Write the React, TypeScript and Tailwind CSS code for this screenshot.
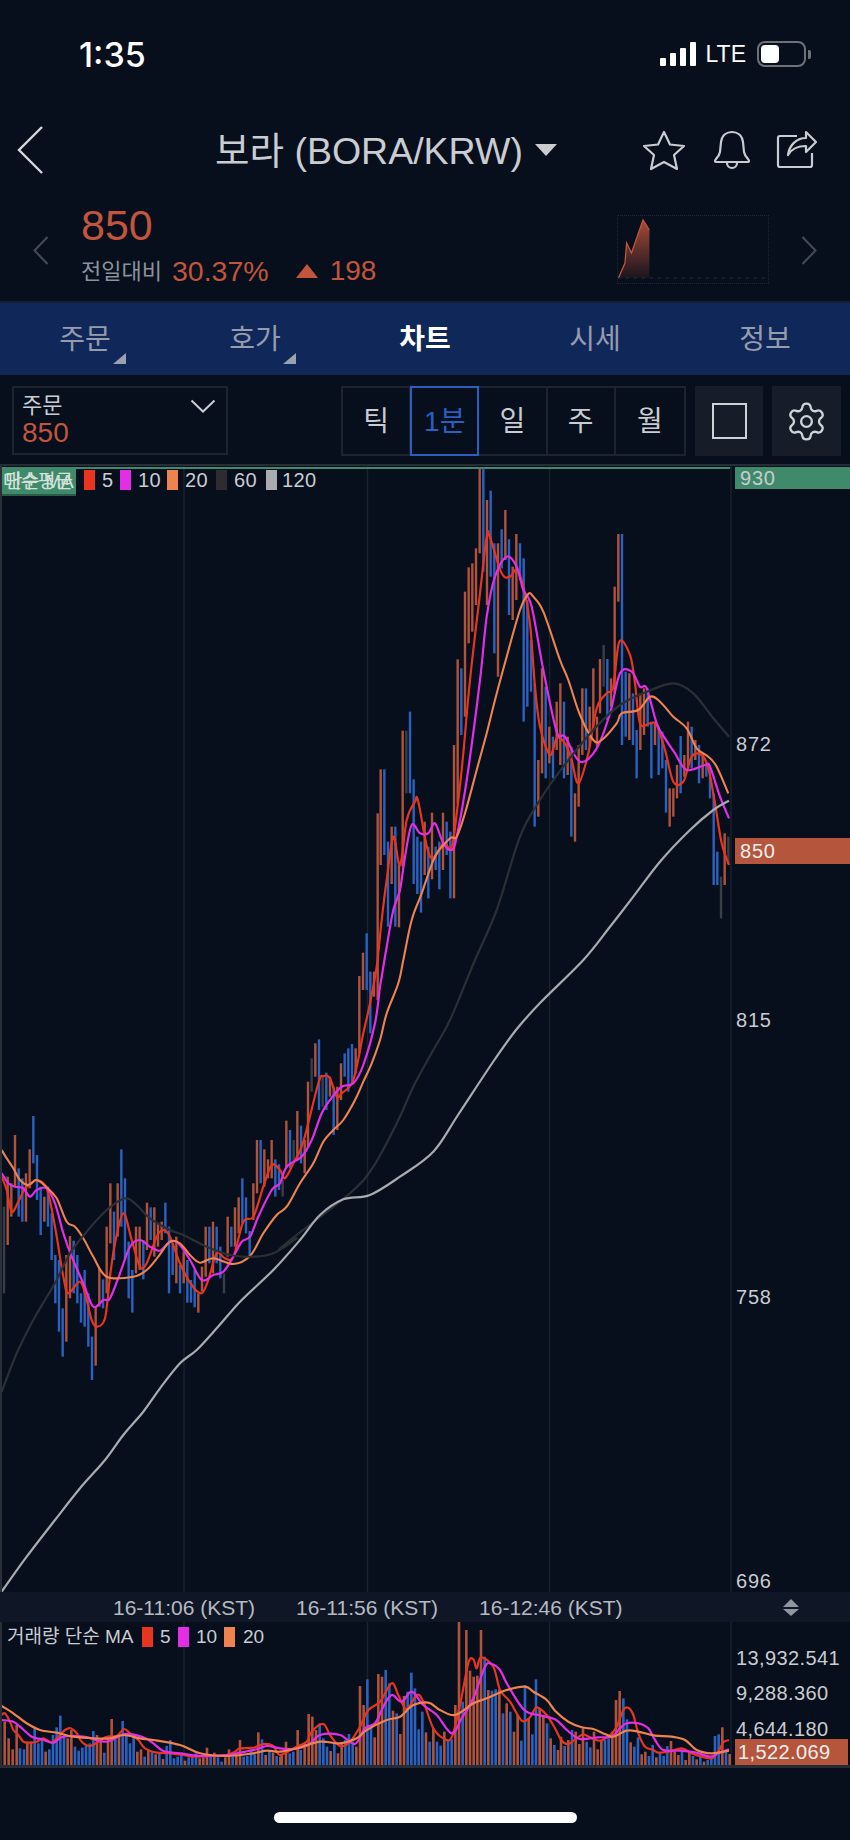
import React from 'react';
import { Settings } from 'lucide-react';

type Bar = [number, number, number, number];
type Pt = [number, number];

const R = 0;
const B = 1;
const G = 2;
const barColors = ['#b0533b', '#2b62bf', '#3a3e45'];

// Coordinates below were read off 3x crops, so each block keeps its crop origin
const toBars = (ox: number, oy: number, rows: Bar[]) =>
  rows.map(([x, t, b, c]) => ({ x: ox + x / 3, t: oy + t / 3, b: oy + b / 3, c }));

const toPts = (ox: number, oy: number, a: number[]): Pt[] => {
  const out: Pt[] = [];
  for (let i = 0; i < a.length; i += 2) out.push([ox + a[i] / 3, oy + a[i + 1] / 3]);
  return out;
};

// Catmull-Rom through the points, keeps the moving averages from looking jagged
const smooth = (p: Pt[]) => {
  let d = `M${p[0][0].toFixed(1)} ${p[0][1].toFixed(1)}`;
  for (let i = 0; i < p.length - 1; i++) {
    const a = p[i - 1] || p[i];
    const b = p[i];
    const c = p[i + 1];
    const e = p[i + 2] || c;
    const c1x = b[0] + (c[0] - a[0]) / 6;
    const c1y = b[1] + (c[1] - a[1]) / 6;
    const c2x = c[0] - (e[0] - b[0]) / 6;
    const c2y = c[1] - (e[1] - b[1]) / 6;
    d += ` C${c1x.toFixed(1)} ${c1y.toFixed(1)} ${c2x.toFixed(1)} ${c2y.toFixed(1)} ${c[0].toFixed(1)} ${c[1].toFixed(1)}`;
  }
  return d;
};

const priceBars = [
  ...toBars(0, 1100, [
    [12,320,580,G],[23,230,435,R],[34,250,350,R],[45,105,260,R],[56,205,350,B],[67,235,365,B],[78,220,365,R],[89,148,265,R],[100,48,190,B],[111,165,300,B],
    [122,260,405,B],[133,290,365,R],[144,260,380,B],[155,340,480,B],[166,465,610,B],[177,480,695,B],[188,625,770,B],[199,465,725,R],[210,408,595,R],[221,422,580,B],
    [232,465,610,B],[243,580,668,B],[254,510,680,B],[265,580,740,B],[276,710,840,B],[287,620,797,R],[298,505,620,R],[309,538,625,B],[320,380,580,R],[331,250,430,R],
    [342,335,480,B],[353,250,410,R],[364,148,380,B],[375,235,480,B],[386,425,595,B],[397,510,638,B],[408,380,520,R],[419,380,510,R],[430,420,538,B],[441,308,450,R],
    [452,322,420,B],[463,322,470,R],[474,368,440,R],[485,365,420,R],[496,308,400,B],[507,380,580,B],[518,430,525,B],[529,410,550,R],[540,495,580,B],[551,455,550,R],
    [562,480,608,B],[573,540,608,B],[584,510,622,B],[595,580,638,R],[606,500,575,R],[617,380,530,R],[628,380,490,B],[639,365,520,R],[650,380,490,B],[661,440,535,B],
    [672,520,580,G],[683,350,470,R],[694,380,440,B],[705,322,440,R],[716,292,400,R],[727,235,370,B],[738,292,400,B],[749,393,470,B],[760,250,360,R],[771,120,280,R],
    [782,120,250,B],[793,148,260,R],[804,178,235,R],[815,120,235,R],[826,178,290,B],[837,193,270,B],[848,240,290,G],[859,62,205,R],[870,90,205,B],[881,120,190,G],
    [892,33,180,R],[903,77,190,B],[914,120,220,R],
  ]),
  ...toBars(150, 950, [
    [474,395,590,R],[485,325,425,G],[496,280,380,R],[507,268,480,B],[518,375,470,G],[529,368,480,B],[540,380,440,R],[551,410,555,B],[562,410,540,R],[573,340,450,R],
    [584,310,380,B],[595,295,425,B],[606,282,400,B],[617,295,370,R],[628,78,310,R],[639,8,120,R],[650,-50,120,B],[661,65,250,B],[672,65,140,R],[683,-410,150,R],
  ]),
  ...toBars(230, 680, [
    [452,268,555,R],[463,268,525,B],[474,485,740,B],[485,440,612,R],[496,440,740,B],[507,555,742,R],[518,152,560,R],[529,152,340,G],[540,95,340,B],[551,298,612,B],
    [562,470,642,B],[573,485,698,B],[584,425,585,R],[595,500,655,B],[606,398,598,R],[617,500,570,B],[628,485,628,B],[639,398,570,R],[650,425,525,B],[661,455,655,B],
  ]),
  ...toBars(380, 460, [
    [222,855,1315,R],[233,598,1030,R],[244,625,825,B],[255,395,770,R],[266,322,550,R],[277,310,515,R],[288,265,435,R],[299,25,280,R],[310,25,335,B],[321,120,435,R],
    [332,92,350,B],[343,250,580,B],[354,250,650,R],[365,208,325,B],[376,150,300,R],[387,238,465,B],[398,320,480,R],[409,222,420,R],[420,250,360,B],[431,295,785,B],
    [442,420,740,B],[453,540,695,B],[464,670,1100,B],[475,900,1070,R],[486,625,940,R],[497,680,955,B],[508,800,910,R],[519,830,955,B],[530,725,870,R],[541,670,915,R],
    [552,725,955,B],[563,830,945,R],[574,860,1130,B],[585,1000,1145,R],[596,855,1040,R],[607,685,885,R],[618,685,870,B],[629,740,860,R],[640,625,800,R],[651,770,860,R],
    [660,597,760,R],[671,555,680,G],[682,597,780,B],[693,655,740,R],[704,380,700,R],[715,222,425,R],[726,222,855,B],[737,635,830,B],[748,640,840,R],[759,700,855,B],
    [770,810,955,B],[781,700,870,R],[792,685,825,R],[803,685,800,B],[814,785,955,B],[825,785,855,R],[836,800,945,B],[847,815,925,B],[858,900,1058,B],[869,985,1100,R],
    [880,985,1070,R],[891,915,1015,R],[902,828,1000,B],[913,885,950,R],[924,785,925,R],[935,800,925,B],[946,840,900,R],[957,855,970,B],[968,885,955,R],[979,915,950,B],
    [990,915,1015,B],[1001,1000,1275,B],[1012,1175,1275,B],[1023,1250,1375,G],[1034,1120,1275,R],[1045,1130,1210,G],
  ]),
];

const ma5 = [
  ...toPts(0, 1100, [5,230,20,270,35,335,55,305,75,265,95,250,110,240,140,265,165,380,190,530,205,580,240,545,260,600,275,660,290,680,315,655,330,530,345,430,370,340,395,420,420,500,440,490,470,410,490,390,510,410,540,490,575,555,605,580,625,540,650,460,675,475,700,470,730,365,760,350,790,260,815,195,840,210,855,235,880,190]),
  ...toPts(150, 950, [460,575,505,400,520,378,540,385,560,440,575,430,610,390,640,250,660,160,680,50]),
  ...toPts(230, 680, [455,720,470,600,490,470,510,555,530,420,555,365,565,365,600,530,640,490,665,500]),
  ...toPts(380, 460, [235,1020,250,880,270,660,300,400,320,230,330,232,365,340,390,350,410,330,430,380,450,490,465,680,480,800,510,885,530,835,555,850,575,900,595,970,625,880,650,745,680,700,700,680,718,545,750,585,765,670,780,790,810,790,830,795,855,870,880,965,910,965,935,890,965,885,985,925,1005,1030,1025,1150,1047,1215]),
];

const ma10 = [
  ...toPts(0, 1100, [5,220,25,250,45,260,70,265,90,290,110,270,140,265,165,310,190,400,215,470,250,550,280,620,310,600,330,595,360,520,390,440,420,420,450,440,480,452,510,425,535,430,570,480,605,540,640,525,670,515,700,470,725,425,750,410,775,350,815,270,840,250,860,200,905,170,935,120,965,40]),
  ...toPts(150, 950, [540,450,575,410,610,400,640,345,675,220,690,110]),
  ...toPts(230, 680, [455,890,470,800,490,690,510,630,525,530,545,435,570,460,595,460,615,430,640,490,665,510,680,470]),
  ...toPts(380, 460, [260,960,300,660,320,470,345,350,380,290,410,320,430,390,455,440,490,630,530,815,555,830,600,905,650,865,690,760,720,640,755,635,780,680,800,685,830,790,855,835,885,880,920,930,975,915,990,920,1020,1010,1047,1075]),
];

const ma20 = [
  ...toPts(0, 1100, [5,150,20,175,40,205,60,240,85,255,110,240,140,262,170,295,200,365,225,380,250,415,280,470,320,530,400,530,440,510,475,470,510,425,540,430,570,465,600,488,640,475,700,492,750,468,790,400,830,345,860,320,900,250,940,190,970,125,1000,90,1030,60,1065,0]),
  ...toPts(150, 950, [640,395,665,340,690,270,710,190,745,100]),
  ...toPts(380, 460, [70,1500,95,1380,125,1300,165,1190,210,1135,230,1130,255,1060,290,930,320,820,345,720,380,590,420,450,445,402,460,410,490,455,540,600,565,660,600,765,640,840,665,840,710,790,725,760,775,750,810,710,840,725,880,770,920,805,950,865,985,890,1010,920,1045,1000]),
];

const ma60 = [
  ...toPts(0, 1300, [5,275,50,160,100,60]),
  ...toPts(0, 1100, [135,600,170,540,210,460,260,395,320,330,375,295,410,315,450,355,510,390,550,405,620,440,690,465,760,470,820,460,890,415]),
  ...toPts(150, 950, [385,900,440,855,600,730,670,650,745,510,790,410,850,300,900,210]),
  ...toPts(380, 460, [285,1500,350,1350,420,1130,480,1020,550,920,640,810,720,735,800,695,880,670,940,700,1000,775,1047,830]),
];

const ma120: Pt[] = [
  ...toPts(0, 1300, [5,875,80,770,165,660,240,565,315,480,370,405,430,335,480,265,540,190,590,150,650,85]),
  ...toPts(0, 1100, [725,600,820,510,900,420,960,345,1030,298,1110,285]),
  ...toPts(150, 950, [750,680,850,605]),
  [458,1115],[493,1062],[516,1030],[540,1003],
  ...toPts(380, 460, [610,1500,690,1400,760,1310,840,1205,930,1110,1000,1050,1047,1022]),
];

const volBars = [
  ...toBars(0, 1620, [
    [14,305,435,R],[26,355,435,R],[38,388,435,R],[50,315,435,R],[60,385,435,B],[72,388,435,B],[82,365,435,R],[93,365,435,R],[104,325,435,B],[115,370,435,B],[126,360,435,B],[137,395,435,R],
    [148,388,435,B],[159,345,435,B],[170,322,435,B],[181,287,435,B],[192,348,435,B],[203,355,435,R],[214,330,435,R],[225,380,435,B],[236,392,435,B],[247,383,435,B],[258,378,435,B],[269,370,435,B],
    [280,333,435,B],[291,345,435,R],[302,360,435,R],[313,398,435,B],[324,350,435,R],[335,297,435,R],[346,355,435,B],[357,350,435,R],[368,303,435,B],[379,345,435,B],[390,370,435,B],[401,352,435,B],
    [412,395,435,R],[423,388,435,R],[434,410,435,B],[445,388,435,R],[456,395,435,B],[467,403,435,R],[478,400,435,B],[489,417,435,R],[500,378,435,B],[511,360,435,B],[522,415,435,B],[533,410,435,B],
    [544,398,435,B],[555,422,435,R],[566,412,435,B],[577,412,435,B],[588,400,435,B],[599,415,435,R],[610,412,435,R],[621,383,435,R],[632,410,435,B],[643,398,435,R],[654,412,435,B],[665,425,435,B],
    [676,412,435,R],[687,388,435,R],[698,410,435,B],[709,402,435,R],[720,360,435,R],[731,410,435,B],[742,408,435,B],[753,388,435,B],[764,403,435,B],[775,337,435,R],[786,358,435,B],[797,405,435,R],
    [808,395,435,B],[819,398,435,R],[830,408,435,B],[841,410,435,R],
  ]),
  ...toBars(280, 1620, [
    [5,403,435,R],[18,365,435,R],[29,400,435,B],[40,395,435,B],[53,330,435,R],[62,390,435,B],[74,370,435,R],[86,282,435,R],[97,290,435,R],[108,330,435,R],[119,310,435,B],[130,355,435,B],
    [141,380,435,B],[152,393,435,R],[163,370,435,B],[174,400,435,R],[185,370,435,R],[196,360,435,B],[207,342,435,B],[218,365,435,B],[229,380,435,R],[240,198,435,R],[251,255,435,R],[262,178,435,B],
    [273,315,435,B],[284,352,435,R],[295,162,435,R],[306,170,435,R],[317,150,435,B],[328,190,435,B],[339,272,435,R],[350,280,435,B],[361,342,435,R],[372,228,435,R],[383,215,435,B],[394,158,435,B],
    [405,205,435,B],[416,328,435,B],[427,275,435,B],[438,337,435,R],[449,365,435,B],[460,325,435,R],[471,365,435,B],[482,377,435,B],[493,335,435,R],[504,360,435,B],[515,358,435,B],[526,255,435,R],
    [537,5,435,R],[548,245,435,B],[559,30,435,R],[570,152,435,R],[581,170,435,R],[592,167,435,R],[603,30,435,R],[614,110,435,B],[625,210,435,R],[636,212,435,B],[647,208,435,B],[658,208,435,R],
    [669,280,435,B],[680,250,435,R],[691,275,435,B],[702,335,435,R],[713,285,435,R],[724,362,435,B],[735,195,435,B],[746,295,435,R],[757,343,435,B],[768,178,435,B],[779,265,435,R],[790,285,435,R],
    [801,310,435,B],[812,355,435,R],[823,375,435,B],[834,390,435,R],
  ]),
  ...toBars(555, 1620, [
    [18,350,435,R],[29,378,435,B],[40,360,435,R],[51,330,435,B],[62,335,435,R],[73,372,435,R],[84,325,435,R],[95,365,435,B],[106,382,435,B],[117,335,435,R],[128,388,435,R],[139,362,435,R],
    [150,360,435,B],[161,355,435,B],[172,335,435,R],[183,240,435,R],[194,213,435,R],[205,235,435,B],[216,298,435,B],[227,367,435,R],[238,380,435,B],[249,352,435,B],[260,403,435,R],[271,395,435,R],
    [282,408,435,B],[293,375,435,B],[304,412,435,R],[315,395,435,B],[326,408,435,B],[337,378,435,B],[348,363,435,R],[359,395,435,R],[370,405,435,R],[381,390,435,B],[392,420,435,R],[403,395,435,R],
    [414,408,435,B],[425,418,435,R],[436,405,435,B],[447,425,435,R],[458,420,435,B],[469,415,435,B],[480,348,435,B],[491,343,435,B],[502,322,435,R],[513,390,435,B],[524,402,435,R],
  ]),
];

const vol5 = [
  ...toPts(0, 1620, [5,285,15,280,30,305,40,330,55,345,70,365,85,368,110,365,130,355,155,368,175,350,195,330,212,325,230,340,245,365,270,378,300,362,320,350,350,348,372,327,390,340,415,360,435,385,470,398,510,400,550,405,580,410,640,408,680,405,705,395,720,385,760,383,790,372,820,378]),
  ...toPts(280, 1620, [0,405,50,380,80,365,95,335,130,312,150,345,180,378,210,365,240,320,265,270,300,245,335,190,355,225,380,268,410,225,430,245,460,325,490,355,515,352,540,255,565,130,580,118,590,145,603,112,640,140,660,210,690,245,725,302,750,292,770,262,800,285]),
  ...toPts(555, 1620, [0,325,20,362,40,372,65,355,85,343,105,352,135,362,165,345,185,320,205,270,220,263,235,285,250,340,270,380,295,390,310,398,340,395,380,385,410,400,440,410,470,415,490,395,505,367,522,360]),
];

const vol10 = [
  ...toPts(0, 1620, [5,300,40,305,60,320,95,350,125,358,160,368,190,350,250,350,320,365,375,342,430,352,460,370,490,393,540,400,600,408,680,405,720,398,770,388,800,378]),
  ...toPts(280, 1620, [0,385,40,387,85,375,120,345,180,345,225,372,255,325,285,310,310,260,335,225,365,245,395,215,430,255,470,285,515,340,545,295,580,235,615,140,635,132,660,150,680,190,725,262,750,280,775,285]),
  ...toPts(555, 1620, [0,298,30,325,60,350,80,358,130,352,170,350,195,325,215,310,250,310,280,325,300,360,325,390,380,392,420,397,465,410,490,400,522,388]),
];

const vol20 = [
  ...toPts(0, 1620, [5,258,40,280,80,310,120,330,170,338,220,350,280,355,330,355,370,345,420,355,460,360,540,375,600,400,680,408,760,400,800,392]),
  ...toPts(280, 1620, [0,395,50,385,120,365,180,370,230,355,260,330,320,300,360,290,400,255,445,248,480,270,525,285,580,250,620,235,680,210,735,200,760,215,800,240]),
  ...toPts(555, 1620, [0,272,40,305,80,322,115,327,150,342,175,350,215,332,250,335,300,347,350,350,390,360,425,390,470,400,522,392]),
];

const Chevron = ({ flip = false }: { flip?: boolean }) => (
  <svg width="16" height="29" viewBox="0 0 16 29" fill="none" className="mt-[56px] shrink-0">
    <path d={flip ? 'M1.5 1 L14.5 14.5 L1.5 28' : 'M14.5 1 L1.5 14.5 L14.5 28'} stroke="#454c57" strokeWidth="2" />
  </svg>
);

const TabMark = () => (
  <svg width="13" height="11" viewBox="0 0 13 11" className="absolute right-[44px] top-[50px]">
    <path d="M13 0 V11 H0 Z" fill="#9aa2b0" />
  </svg>
);

const Swatch = ({ className }: { className: string }) => <span className={`h-[20px] w-[11px] ${className}`} />;

export default function App() {
  return (
    <div
      className="flex h-[1840px] w-[850px] flex-col overflow-hidden bg-[#070e1c] text-[#c9ccd0]"
      style={{ fontFamily: '"Liberation Sans", "Noto Sans CJK KR", sans-serif' }}
    >
      {/* status bar */}
      <div className="flex h-[120px] shrink-0 items-start pl-[79px] pr-[39px] pt-[38px]">
        <span className="text-[34px] font-medium leading-[34px] text-white" style={{ fontFamily: 'Inter, sans-serif' }}>
          1:35
        </span>
        <div className="ml-auto flex items-center pt-[3px]">
          <div className="flex h-[24px] items-end gap-[4px]">
            <span className="h-[8px] w-[6px] rounded-[1px] bg-white" />
            <span className="h-[13px] w-[6px] rounded-[1px] bg-white" />
            <span className="h-[18px] w-[6px] rounded-[1px] bg-white" />
            <span className="h-[24px] w-[6px] rounded-[1px] bg-white" />
          </div>
          <span className="ml-[10px] text-[23px] font-medium leading-[26px] text-white">LTE</span>
          <div className="ml-[11px] flex h-[26px] w-[49px] items-center rounded-[8px] border-2 border-[#6d7278] px-[2px]">
            <span className="h-[18px] w-[18px] rounded-[4px] bg-white" />
          </div>
          <span className="ml-[2px] h-[9px] w-[3px] rounded-r-[2px] bg-[#6d7278]" />
        </div>
      </div>

      {/* nav */}
      <div className="flex h-[60px] shrink-0 items-center">
        <svg width="26" height="48" viewBox="0 0 26 48" fill="none" className="ml-[17px]">
          <path d="M25 1 L2 24 L25 47" stroke="#d6d8db" strokeWidth="2.4" />
        </svg>
        <span className="ml-[172px] mt-[2px] whitespace-nowrap text-[37.5px] leading-[44px] text-[#c9ccd0]">보라 (BORA/KRW)</span>
        <svg width="22" height="12" viewBox="0 0 22 12" className="ml-[12px]">
          <path d="M0 0 H22 L11 12 Z" fill="#c9ccd0" />
        </svg>
        <svg width="44" height="42" viewBox="0 0 44 42" fill="none" className="ml-[85px]">
          <path d="M22 3 L28 15.5 L42 17 L32 26 L35 40 L22 33 L9 40 L12 26 L2 17 L16 15.5 Z" stroke="#c9ccd0" strokeWidth="2.2" strokeLinejoin="round" />
        </svg>
        <svg width="40" height="40" viewBox="0 0 40 40" fill="none" className="ml-[26px]">
          <path d="M3 31 C3 29 7 27 8 22 L9 12 C10 5 15 2 20 2 C25 2 30 5 31 12 L32 22 C33 27 37 29 37 31 C37 32 36 32 35 32 H5 C4 32 3 32 3 31 Z M15 33 a5 5 0 0 0 10 0" stroke="#c9ccd0" strokeWidth="2.2" strokeLinejoin="round" />
        </svg>
        <svg width="42" height="42" viewBox="0 0 42 42" fill="none" className="ml-[24px]">
          <path d="M21 7 H4 Q2 7 2 9 V36 Q2 38 4 38 H34 Q36 38 36 36 V24" stroke="#c9ccd0" strokeWidth="2.2" />
          <path d="M30 3 L40 13 L30 23 V17 C22 17 16 19 12 26 C13 17 20 9 30 9 Z" stroke="#c9ccd0" strokeWidth="2.2" strokeLinejoin="round" />
        </svg>
      </div>

      {/* price row */}
      <div className="flex h-[121px] shrink-0 items-start pl-[33px] pr-[33px]">
        <Chevron />
        <div className="ml-[32px] flex flex-col pt-[23px]">
          <span className="text-[43px] leading-[44px] text-[#c2553b]">850</span>
          <div className="mt-[9px] flex h-[30px] items-center whitespace-nowrap">
            <span className="text-[22px] text-[#8c929c]">전일대비</span>
            <span className="ml-[10px] text-[28.5px] text-[#c2553b]">30.37%</span>
            <svg width="22" height="14" viewBox="0 0 22 14" className="ml-[27px]">
              <path d="M11 0 L22 14 H0 Z" fill="#c2553b" />
            </svg>
            <span className="ml-[12px] text-[28px] text-[#c2553b]">198</span>
          </div>
        </div>
        <div className="ml-auto mr-[32px] mt-[35px] h-[69px] w-[152px] border border-dotted border-[#1c2a38]">
          <svg width="150" height="67" viewBox="619 216 150 67" className="block">
            <defs>
              <linearGradient id="spark" x1="0" y1="0" x2="0" y2="1">
                <stop offset="0" stopColor="#c2553b" stopOpacity="0.85" />
                <stop offset="1" stopColor="#c2553b" stopOpacity="0.1" />
              </linearGradient>
            </defs>
            <path d="M619.5 278 L626 263 L627.6 243 L632.5 253 L644 220 L650.4 230 V278 Z" fill="url(#spark)" />
            <path d="M619.5 278 L626 263 L627.6 243 L632.5 253 L644 220 L650.4 230" fill="none" stroke="#c2553b" strokeWidth="1.3" />
            <path d="M619 278 H768" stroke="#26303c" strokeWidth="1" strokeDasharray="3 5" />
          </svg>
        </div>
        <Chevron flip />
      </div>

      {/* tabs */}
      <div className="grid h-[74px] shrink-0 grid-cols-5 border-t-2 border-[#161f33] bg-[#10275a] text-[28px] text-[#959cab]">
        <div className="relative flex items-center justify-center pt-[2px]">
          주문
          <TabMark />
        </div>
        <div className="relative flex items-center justify-center pt-[2px]">
          호가
          <TabMark />
        </div>
        <div className="flex items-center justify-center pt-[2px] font-bold text-white">차트</div>
        <div className="flex items-center justify-center pt-[2px]">시세</div>
        <div className="flex items-center justify-center pt-[2px]">정보</div>
      </div>

      {/* toolbar */}
      <div className="flex h-[89px] shrink-0 items-start pl-[12px] pt-[11px]">
        <div className="relative flex h-[69px] w-[216px] flex-col border-2 border-[#1e242d] pl-[8px] pt-[5px]">
          <span className="text-[22px] leading-[26px] text-[#c9ccd0]">주문</span>
          <span className="text-[28px] leading-[28px] text-[#c2553b]">850</span>
          <svg width="26" height="14" viewBox="0 0 26 14" fill="none" className="absolute right-[10px] top-[11px]">
            <path d="M1.5 1.5 L13 12.5 L24.5 1.5" stroke="#c9ccd0" strokeWidth="2" />
          </svg>
        </div>
        <div className="ml-[113px] grid h-[70px] w-[345px] grid-cols-5 border-2 border-[#1e242d] text-[28px] leading-none">
          <div className="flex items-center justify-center border-r-2 border-[#1e242d] pt-[2px]">틱</div>
          <div className="-my-[2px] -ml-[1px] flex items-center justify-center border-2 border-[#2a5fc0] pt-[2px] text-[#2a5fc0]">1분</div>
          <div className="flex items-center justify-center border-r-2 border-[#1e242d] pt-[2px]">일</div>
          <div className="flex items-center justify-center border-r-2 border-[#1e242d] pt-[2px]">주</div>
          <div className="flex items-center justify-center pt-[2px]">월</div>
        </div>
        <div className="ml-[9px] flex h-[70px] w-[68px] items-center justify-center bg-[#161d28]">
          <span className="h-[36px] w-[35px] border-2 border-[#cfd2d6]" />
        </div>
        <div className="ml-[9px] flex h-[70px] w-[69px] items-center justify-center bg-[#161d28]">
          <Settings size={43} strokeWidth={1.3} color="#cfd2d6" />
        </div>
      </div>

      {/* price chart */}
      <div className="flex h-[1128px] shrink-0 border-t-2 border-[#262c35]">
        <div className="relative h-full w-[732px] border-l-2 border-[#2a3038]">
          <svg width="730" height="1126" viewBox="2 466 730 1126" className="block" fill="none">
            <path d="M184 466 V1592 M367.5 466 V1592 M549.6 466 V1592 M731 466 V1592" stroke="#1a222d" strokeWidth="1.5" />
            <path d="M2 468 H730" stroke="#3f8a6b" strokeWidth="2" />
            {priceBars.map((b, i) => (
              <rect key={i} x={b.x - 1.2} y={b.t} width="2.4" height={b.b - b.t} fill={barColors[b.c]} />
            ))}
            <path d={smooth(ma5)} stroke="#e8351f" strokeWidth="2.2" />
            <path d={smooth(ma10)} stroke="#e32ee6" strokeWidth="2.2" />
            <path d={smooth(ma20)} stroke="#ee8350" strokeWidth="2.1" />
            <path d={smooth(ma60)} stroke="#2c3036" strokeWidth="2.2" />
            <path d={smooth(ma120)} stroke="#a8acaf" strokeWidth="2.2" />
          </svg>

          {/* legend, the two labels really do sit on top of each other in the app */}
          <div className="absolute left-0 top-[2px] flex h-[28px] items-start text-[20px] leading-[24px] tracking-[0.4px] text-[#c9ccd0]">
            <div className="relative h-[28px] w-[74px] border-b-2 border-[#2b5a4b] bg-[#3f8a6b] text-[19px] tracking-normal text-[#d5e2dc]">
              <span className="absolute left-[1px] top-[2px] whitespace-nowrap">매수평균</span>
              <span className="absolute left-[3px] top-[2px] whitespace-nowrap">단순 MA</span>
            </div>
            <div className="ml-[8px] flex h-[24px] items-center">
              <Swatch className="bg-[#e8351f]" />
              <span className="ml-[7px] w-[18px]">5</span>
              <Swatch className="bg-[#e32ee6]" />
              <span className="ml-[7px] w-[29px]">10</span>
              <Swatch className="bg-[#ee8350]" />
              <span className="ml-[7px] w-[31px]">20</span>
              <Swatch className="bg-[#2f2b30]" />
              <span className="ml-[7px] w-[32px]">60</span>
              <Swatch className="bg-[#a8acaf]" />
              <span className="ml-[5px]">120</span>
            </div>
          </div>
        </div>

        {/* price axis */}
        <div className="relative h-full flex-1 text-[20px] leading-[24px] tracking-[0.8px] text-[#c9ccd0]">
          <div className="absolute left-[3px] top-[1px] h-[22px] w-[115px] bg-[#3f8a6b] pl-[5px] leading-[22px]">930</div>
          <span className="absolute left-[4px] top-[266px]">872</span>
          <div className="absolute left-[3px] top-[372px] h-[26px] w-[115px] bg-[#b5553c] pl-[5px] leading-[26px] text-[#eee]">850</div>
          <span className="absolute left-[4px] top-[542px]">815</span>
          <span className="absolute left-[4px] top-[819px]">758</span>
          <span className="absolute left-[4px] top-[1103px]">696</span>
        </div>
      </div>

      {/* time axis */}
      <div className="relative flex h-[30px] shrink-0 items-center bg-[#0f1726] pt-[1px] text-[21px] text-[#b6bac0]">
        <span className="ml-[113px] whitespace-nowrap">16-11:06 (KST)</span>
        <span className="ml-[41px] whitespace-nowrap">16-11:56 (KST)</span>
        <span className="ml-[41px] whitespace-nowrap">16-12:46 (KST)</span>
        <svg width="18" height="18" viewBox="0 0 18 18" className="absolute left-[782px] top-[7px]">
          <path d="M9 0 L17 8 H1 Z" fill="#8f96a0" />
          <path d="M1 10 H17 L9 17 Z" fill="#8f96a0" />
        </svg>
      </div>

      {/* volume */}
      <div className="flex h-[146px] shrink-0 border-b-[3px] border-[#262c35]">
        <div className="relative h-full w-[732px] border-l-2 border-[#2a3038]">
          <svg width="730" height="143" viewBox="2 1622 730 143" className="block" fill="none">
            <path d="M184 1622 V1765 M367.5 1622 V1765 M549.6 1622 V1765 M731 1622 V1765" stroke="#1a222d" strokeWidth="1.5" />
            {volBars.map((b, i) => (
              <rect key={i} x={b.x - 1.3} y={b.t} width="2.6" height={b.b - b.t} fill={barColors[b.c]} />
            ))}
            <path d={smooth(vol5)} stroke="#e8351f" strokeWidth="2.2" />
            <path d={smooth(vol10)} stroke="#e32ee6" strokeWidth="2.2" />
            <path d={smooth(vol20)} stroke="#ee8350" strokeWidth="2.2" />
          </svg>
          <div className="absolute left-[5px] top-[3px] flex h-[24px] items-center whitespace-nowrap text-[19px] text-[#c9ccd0]">
            <span className="w-[135px]">거래량 단순 MA</span>
            <Swatch className="bg-[#e8351f]" />
            <span className="ml-[7px] w-[18px]">5</span>
            <Swatch className="bg-[#e32ee6]" />
            <span className="ml-[7px] w-[28px]">10</span>
            <Swatch className="bg-[#ee8350]" />
            <span className="ml-[8px]">20</span>
          </div>
        </div>
        <div className="relative h-full flex-1 text-[20px] leading-[24px] tracking-[0.4px] text-[#c9ccd0]">
          <span className="absolute left-[4px] top-[24px]">13,932.541</span>
          <span className="absolute left-[4px] top-[59px]">9,288.360</span>
          <span className="absolute left-[4px] top-[95px]">4,644.180</span>
          <div className="absolute bottom-0 left-[3px] h-[26px] w-[113px] bg-[#b5553c] pl-[3px] leading-[26px] text-[#eee]">1,522.069</div>
        </div>
      </div>

      {/* home indicator */}
      <div className="flex flex-1 justify-center pt-[44px]">
        <span className="h-[11px] w-[303px] rounded-full bg-white" />
      </div>
    </div>
  );
}
